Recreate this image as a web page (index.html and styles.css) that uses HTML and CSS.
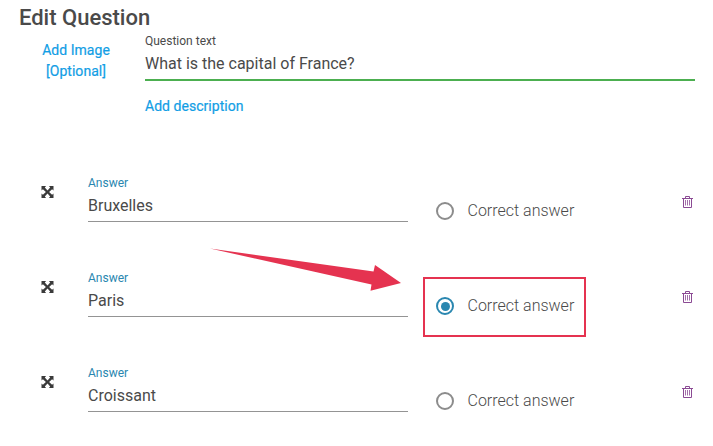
FILE: index.html
```
<!DOCTYPE html>
<html lang="en">
<head>
    <meta charset="UTF-8">
    <meta name="viewport" content="width=device-width, initial-scale=1.0">
    <title>Edit Question</title>
    <link rel="stylesheet" href="styles.css">
</head>
<body>
    <!-- Shared icons -->
    <svg class="icon-defs" width="0" height="0">
        <symbol id="icon-move" viewBox="0 0 12 12">
            <path d="M0 0h4.6L3.3 1.4 6 4.4l2.7-3L7.4 0H12v4.6l-1.4-1.3L7.6 6l3 2.7L12 7.4V12H7.4l1.3-1.4L6 7.6l-2.7 3L4.6 12H0V7.4l1.4 1.3L4.4 6l-3-2.7L0 4.6z" fill="currentColor"/>
        </symbol>
        <symbol id="icon-trash" viewBox="0 0 11 12">
            <path d="M0 2.5h11M3.500 2.5v-2h4v2M1.5 2.5v9h8v-9" fill="none" stroke="currentColor"/>
            <path d="M3.5 4v5.5M5.5 4v5.5M7.5 4v5.5" fill="none" stroke="currentColor" stroke-width=".8"/>
        </symbol>
    </svg>

    <h1>Edit Question</h1>

    <div class="question">
        <a class="link add-image">Add Image<br>[Optional]</a>
        <div class="question-field">
            <label class="question-label">Question text</label>
            <div class="question-value">What is the capital of France?</div>
            <a class="link add-description">Add description</a>
        </div>
    </div>

    <div class="answers">
        <div class="answer">
            <svg class="move"><use href="#icon-move"/></svg>
            <div class="answer-field">
                <label class="answer-label">Answer</label>
                <div class="answer-value">Bruxelles</div>
            </div>
            <div class="correct">
                <span class="radio"></span>
                <span class="correct-text">Correct answer</span>
            </div>
            <svg class="trash"><use href="#icon-trash"/></svg>
        </div>

        <div class="answer">
            <svg class="move"><use href="#icon-move"/></svg>
            <div class="answer-field">
                <label class="answer-label">Answer</label>
                <div class="answer-value">Paris</div>
            </div>
            <div class="correct highlighted">
                <span class="radio checked"></span>
                <span class="correct-text">Correct answer</span>
                <svg class="arrow" viewBox="0 0 192 44">
                    <path d="M0 0.5L163.500 23.500L165 17L191 35L160.500 42.800L161.500 36.500z" fill="#e53350"/>
                </svg>
            </div>
            <svg class="trash"><use href="#icon-trash"/></svg>
        </div>

        <div class="answer">
            <svg class="move"><use href="#icon-move"/></svg>
            <div class="answer-field">
                <label class="answer-label">Answer</label>
                <div class="answer-value">Croissant</div>
            </div>
            <div class="correct">
                <span class="radio"></span>
                <span class="correct-text">Correct answer</span>
            </div>
            <svg class="trash"><use href="#icon-trash"/></svg>
        </div>
    </div>
</body>
</html>
```
FILE: styles.css
```
* {
    box-sizing: border-box;
}
body {
    margin: 0;
    padding: 4px 18px 0 19px;
    font-family: Roboto, sans-serif;
    color: #4a4a4a;
    background-color: #fff;
    overflow: hidden;
}
.icon-defs {
    display: none;
}
h1 {
    margin: 0;
    font-size: 22px;
    font-weight: 500;
    line-height: 28px;
}
.question {
    display: flex;
    height: 140px;
}
.link {
    color: #129ee5;
    font-size: 14px;
    font-weight: 400;
    letter-spacing: 0.04px;
    -webkit-text-stroke: 0.2px #129ee5;
}
.add-image {
    width: 114px;
    margin-right: 12px;
    padding-top: 8px;
    line-height: 21px;
    text-align: center;
}
.question-field {
    display: flex;
    flex-direction: column;
    flex: 1;
}
.question-label {
    padding-top: 1px;
    font-size: 12px;
    line-height: 16px;
}
.question-value {
    height: 32px;
    border-bottom: 2px solid #4caf50;
    font-size: 16px;
    line-height: 29px;
}
.add-description {
    padding-top: 15px;
    line-height: 21px;
}
.answer {
    display: flex;
    height: 95px;
    padding-left: 22px;
}
.move {
    width: 13px;
    height: 12px;
    margin-top: 14px;
    color: #3a3a3a;
}
.answer-field {
    width: 320px;
    margin-left: 34px;
}
.answer-label {
    display: block;
    padding-top: 3px;
    color: #2a87b0;
    font-size: 12px;
    line-height: 16px;
}
.answer-value {
    height: 31px;
    border-bottom: 1px solid #949494;
    font-size: 16px;
    line-height: 29px;
}
.correct {
    position: relative;
    display: flex;
    align-items: center;
    width: 163px;
    height: 60px;
    margin: 10px 0 0 15px;
    padding: 0 0 2px 13px;
}
/* Frame drawn around the right answer */
.highlighted {
    padding: 0 0 2px 11px;
    border: 2px solid #e53350;
}
.radio {
    display: flex;
    align-items: center;
    justify-content: center;
    width: 18px;
    height: 18px;
    margin-right: 13.5px;
    border: 2px solid #8c8c8c;
    border-radius: 50%;
}
.radio.checked {
    border-color: #2a87b0;
}
.radio.checked::after {
    content: '';
    width: 9px;
    height: 9px;
    border-radius: 50%;
    background-color: #2a87b0;
}
.correct-text {
    padding-bottom: 1px;
    font-size: 16px;
    font-weight: 300;
}
.arrow {
    position: absolute;
    top: -31.5px;
    left: -215px;
    width: 192px;
    height: 44px;
}
.trash {
    width: 11px;
    height: 12px;
    margin: 24px 0 0 96px;
    color: #8b4a94;
}
```
